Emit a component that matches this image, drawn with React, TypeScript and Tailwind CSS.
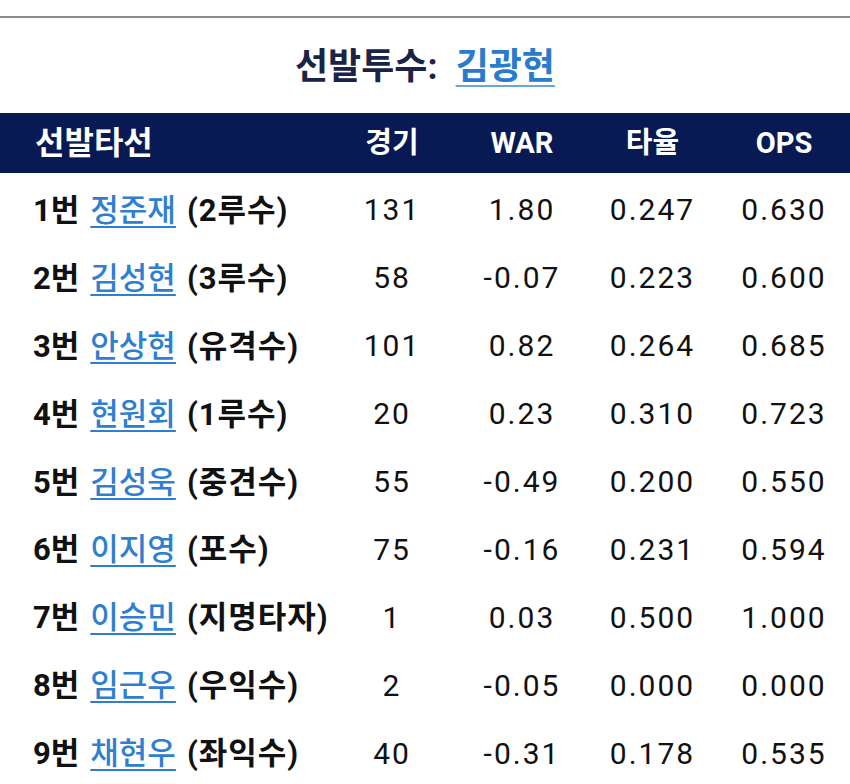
import React from 'react';

type Row = {
  order: string;
  name: string;
  pos: string;
  games: string;
  war: string;
  avg: string;
  ops: string;
};

const rows: Row[] = [
  { order: '1번', name: '정준재', pos: '(2루수)', games: '131', war: '1.80', avg: '0.247', ops: '0.630' },
  { order: '2번', name: '김성현', pos: '(3루수)', games: '58', war: '-0.07', avg: '0.223', ops: '0.600' },
  { order: '3번', name: '안상현', pos: '(유격수)', games: '101', war: '0.82', avg: '0.264', ops: '0.685' },
  { order: '4번', name: '현원회', pos: '(1루수)', games: '20', war: '0.23', avg: '0.310', ops: '0.723' },
  { order: '5번', name: '김성욱', pos: '(중견수)', games: '55', war: '-0.49', avg: '0.200', ops: '0.550' },
  { order: '6번', name: '이지영', pos: '(포수)', games: '75', war: '-0.16', avg: '0.231', ops: '0.594' },
  { order: '7번', name: '이승민', pos: '(지명타자)', games: '1', war: '0.03', avg: '0.500', ops: '1.000' },
  { order: '8번', name: '임근우', pos: '(우익수)', games: '2', war: '-0.05', avg: '0.000', ops: '0.000' },
  { order: '9번', name: '채현우', pos: '(좌익수)', games: '40', war: '-0.31', avg: '0.178', ops: '0.535' },
];

const font = { fontFamily: 'Roboto, "Noto Sans CJK KR", sans-serif' };

const App: React.FC = () => {
  return (
    <div className="w-[850px] h-[784px] bg-white overflow-hidden" style={font}>
      <div className="h-[16px]" />
      <div className="h-[2px] bg-[#8c8c8c]" />

      {/* starting pitcher */}
      <div className="h-[95px] flex items-center justify-center pt-[2px]">
        <h2 className="text-[36px] font-bold text-[#1b2347] leading-none whitespace-nowrap">
          선발투수:
          <a className="ml-[18px] text-[#2a7bcb] underline decoration-[#6aa5de] decoration-[1.5px] underline-offset-[6px]">
            김광현
          </a>
        </h2>
      </div>

      {/* lineup table */}
      <div className="grid grid-cols-[327px_130px_130px_131px_1fr] h-[60px] items-center bg-[#081a54] text-white font-bold text-[29px] leading-none">
        <div className="pl-[35px] text-[32px]">선발타선</div>
        <div className="text-center">경기</div>
        <div className="text-center">WAR</div>
        <div className="text-center">타율</div>
        <div className="text-center">OPS</div>
      </div>

      {rows.map((r) => (
        <div
          key={r.order}
          className="grid grid-cols-[327px_130px_130px_131px_1fr] h-[67.9px] pt-[7px] items-center text-[30px] text-[#111] leading-none"
        >
          <div className="pl-[33px] whitespace-nowrap flex items-baseline gap-[11px] text-[31px]">
            <span className="font-bold">{r.order}</span>
            <a className="font-medium text-[#2f7fd0] underline decoration-[1.5px] underline-offset-[5px]">{r.name}</a>
            <span className="font-bold tracking-[1px]">{r.pos}</span>
          </div>
          <div className="text-center tracking-[2px]">{r.games}</div>
          <div className="text-center tracking-[2px]">{r.war}</div>
          <div className="text-center tracking-[2px]">{r.avg}</div>
          <div className="text-center tracking-[2px]">{r.ops}</div>
        </div>
      ))}
    </div>
  );
};

export default App;
